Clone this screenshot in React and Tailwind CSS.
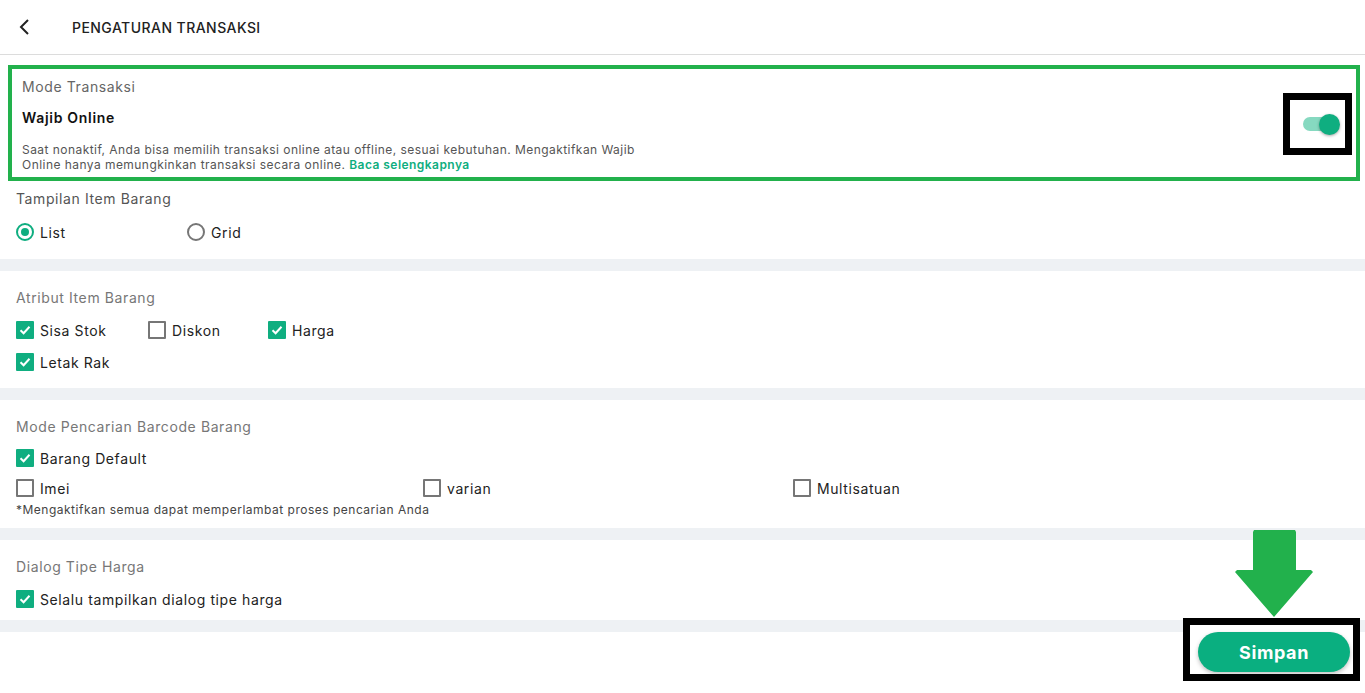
import { useState } from "react";

const Check = ({ checked, label, className = "" }) => (
    <div className={`flex items-center h-[20px] ${className}`}>
        {checked ? (
            <span className="w-[18px] h-[18px] bg-[#0fae80] rounded-[1px] flex items-center justify-center">
                <svg width="14" height="14" viewBox="0 0 14 14">
                    <path d="M2.5 7.2 L5.6 10.2 L11.5 3.8" fill="none" stroke="white" strokeWidth="2" />
                </svg>
            </span>
        ) : (
            <span className="w-[18px] h-[18px] border-2 border-[#767676] rounded-[1px]" />
        )}
        <span className="ml-[6px] text-[14px] tracking-[0.6px] text-[#222]">{label}</span>
    </div>
);

const Radio = ({ checked, label, className = "" }) => (
    <div className={`flex items-center h-[20px] ${className}`}>
        {checked ? (
            <span className="w-[18px] h-[18px] rounded-full border-2 border-[#0fae80] flex items-center justify-center">
                <span className="w-[8px] h-[8px] rounded-full bg-[#0fae80]" />
            </span>
        ) : (
            <span className="w-[18px] h-[18px] rounded-full border-2 border-[#767676]" />
        )}
        <span className="ml-[6px] text-[14px] tracking-[0.6px] text-[#222]">{label}</span>
    </div>
);

const Divider = () => <div className="h-[12px] bg-[#eef1f4]" />;

export default function App() {
    const [online, setOnline] = useState(true);

    return (
        <div className="relative w-[1365px] h-[693px] bg-white overflow-hidden font-['Inter',sans-serif]">
            {/* header */}
            <div className="h-[55px] border-b border-[#dcdcdc] flex items-center">
                <svg width="40" height="40" viewBox="0 0 40 40" className="ml-[4px]">
                    <polyline points="24,13 17,20 24,27" fill="none" stroke="#222" strokeWidth="2" />
                </svg>
                <h1 className="ml-[28px] text-[14px] font-medium text-[#222] tracking-[0.45px]">PENGATURAN TRANSAKSI</h1>
            </div>

            {/* mode transaksi */}
            <div className="mt-[10px] ml-2 mr-[5px] border-4 border-[#22b14c] pl-[10px] pr-[4px] pt-[9px] pb-[5px] flex justify-between">
                <div>
                    <p className="text-[14px] leading-[18px] tracking-[0.6px] text-[#666]">Mode Transaksi</p>
                    <p className="mt-[13px] text-[14px] leading-[18px] tracking-[0.7px] font-semibold text-[#111]">Wajib Online</p>
                    <p className="mt-[15px] max-w-[625px] text-[12px] leading-[15px] tracking-[0.45px] text-[#555]">
                        Saat nonaktif, Anda bisa memilih transaksi online atau offline, sesuai kebutuhan. Mengaktifkan Wajib Online hanya memungkinkan transaksi secara online.{" "}
                        <span className="font-semibold text-[#0fae80]">Baca selengkapnya</span>
                    </p>
                </div>
                <div className="self-start mt-[15px] w-[69px] h-[62px] border-[7px] border-black flex items-center pl-[13px]">
                    <button onClick={() => setOnline(!online)} className="relative w-[37px] h-[21px] flex items-center">
                        <span className={`w-[30px] h-[14px] rounded-full ${online ? "bg-[#86d9c0]" : "bg-gray-300"}`} />
                        <span className={`absolute top-0 ${online ? "right-0 bg-[#0fae80]" : "left-0 bg-white"} w-[21px] h-[21px] rounded-full shadow-[0_1px_3px_rgba(0,0,0,0.35)]`} />
                    </button>
                </div>
            </div>

            {/* tampilan */}
            <div className="px-4 pt-[9px] pb-[17px]">
                <p className="text-[14px] leading-[18px] tracking-[0.6px] text-[#555]">Tampilan Item Barang</p>
                <div className="mt-[14px] flex">
                    <Radio checked label="List" className="w-[171px]" />
                    <Radio label="Grid" />
                </div>
            </div>
            <Divider />

            {/* atribut */}
            <div className="px-4 pt-[18px] pb-[16px]">
                <p className="text-[14px] leading-[18px] tracking-[0.6px] text-[#777]">Atribut Item Barang</p>
                <div className="mt-[13px] flex">
                    <Check checked label="Sisa Stok" className="w-[132px]" />
                    <Check label="Diskon" className="w-[120px]" />
                    <Check checked label="Harga" />
                </div>
                <div className="mt-[12px] flex">
                    <Check checked label="Letak Rak" />
                </div>
            </div>
            <Divider />

            {/* barcode */}
            <div className="px-4 pt-[18px] pb-[11px]">
                <p className="text-[14px] leading-[18px] tracking-[0.6px] text-[#777]">Mode Pencarian Barcode Barang</p>
                <div className="mt-[12px] flex">
                    <Check checked label="Barang Default" />
                </div>
                <div className="mt-[10px] flex">
                    <Check label="Imei" className="w-[407px]" />
                    <Check label="varian" className="w-[370px]" />
                    <Check label="Multisatuan" />
                </div>
                <p className="mt-[5px] text-[12px] leading-[14px] tracking-[0.5px] text-[#444]">*Mengaktifkan semua dapat memperlambat proses pencarian Anda</p>
            </div>
            <Divider />

            {/* dialog tipe harga */}
            <div className="px-4 pt-[18px] pb-[11px]">
                <p className="text-[14px] leading-[18px] tracking-[0.6px] text-[#777]">Dialog Tipe Harga</p>
                <div className="mt-[13px] flex">
                    <Check checked label="Selalu tampilkan dialog tipe harga" />
                </div>
            </div>
            <Divider />

            {/* footer */}
            <div className="flex justify-end mr-[5px]">
                <div className="-mt-[14px] bg-white border-[7px] border-black pl-[8px] pr-[3px] pt-[7px] pb-[2px]">
                    <button className="w-[152px] h-[40px] rounded-full bg-[#0aaf80] text-white text-[18px] font-bold tracking-[0.6px] shadow-[0_2px_4px_rgba(0,0,0,0.25)]">
                        Simpan
                    </button>
                </div>
            </div>

            {/* arrow annotation */}
            <svg className="absolute left-[1235px] top-[530px]" width="78" height="87" viewBox="0 0 78 87">
                <polygon points="19,0 60,0 61,2 61,40 76,40 78,42 39,87 0,42 2,40 18,40 18,2" fill="#22b14c" />
            </svg>
        </div>
    );
}
